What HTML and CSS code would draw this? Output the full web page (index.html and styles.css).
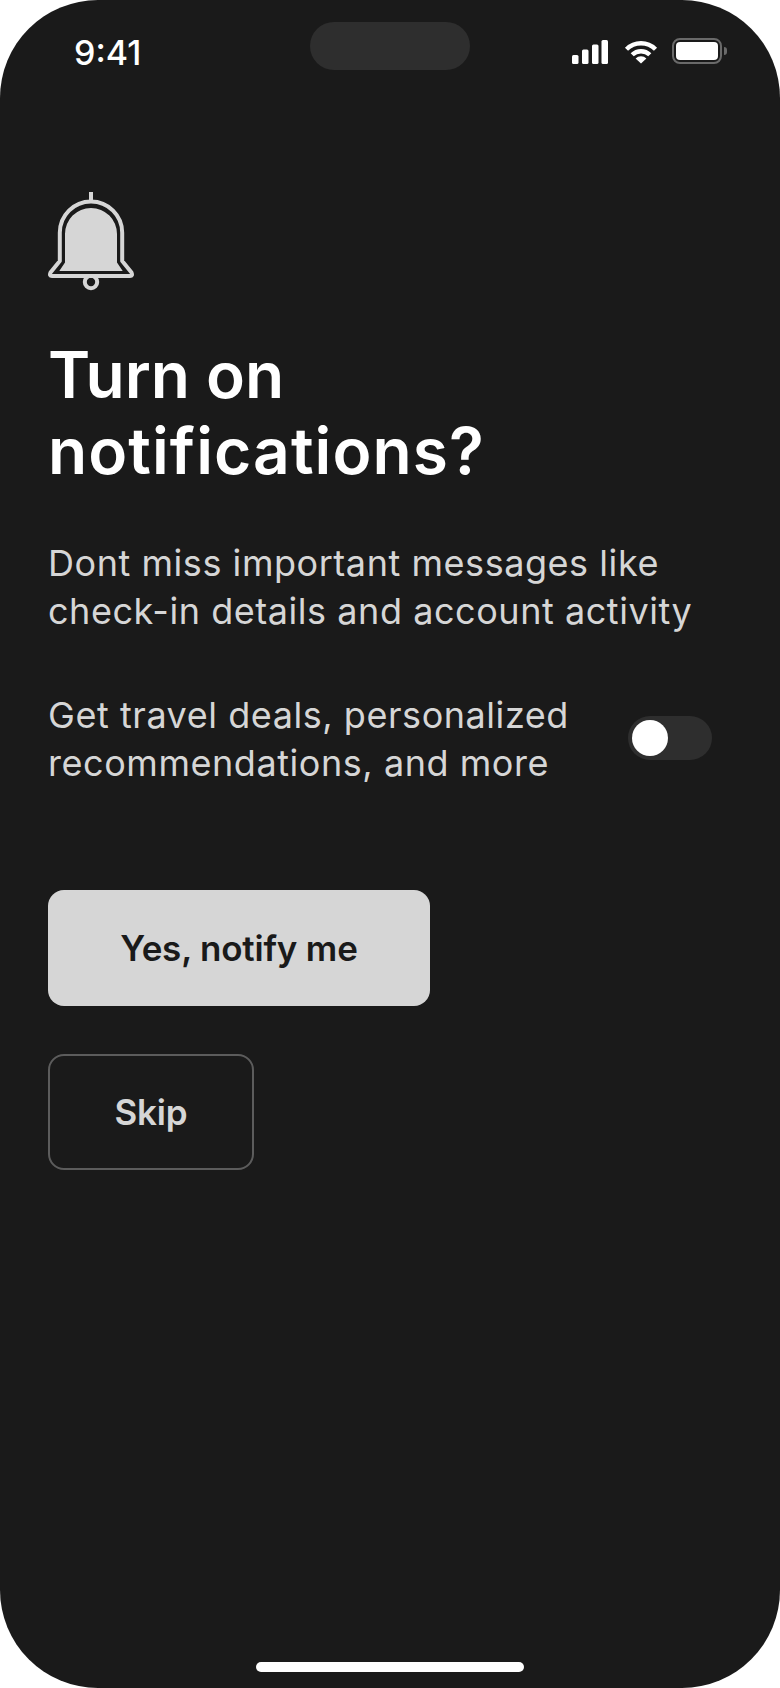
FILE: index.html
```html
<!DOCTYPE html>
<html lang="en">
<head>
  <meta charset="UTF-8" />
  <meta name="viewport" content="width=device-width, initial-scale=1.0"/>
  <title>Turn on notifications?</title>
  <link rel="stylesheet" href="styles.css">
</head>
<body>
  <div class="pantalla">

    <!-- status bar -->
    <div class="barra-estado">
      <span class="hora">9:41</span>
      <div class="isla"></div>
      <div class="iconos-estado">
        <svg class="senal" width="36" height="24" viewBox="0 0 36 24">
          <rect x="0" y="15" width="6.5" height="9" rx="1.5"/>
          <rect x="10" y="9.5" width="6.5" height="14.5" rx="1.5"/>
          <rect x="20" y="4.5" width="6.5" height="19.5" rx="1.5"/>
          <rect x="29.5" y="0" width="6.5" height="24" rx="1.5"/>
        </svg>
        <svg class="wifi" width="34" height="24" viewBox="0 0 34 24">
          <path d="M2.5 9.2 A20.5 20.5 0 0 1 31.5 9.2" fill="none" stroke="#fff" stroke-width="4.4"/>
          <path d="M8.2 14.8 A12.5 12.5 0 0 1 25.8 14.8" fill="none" stroke="#fff" stroke-width="4.4"/>
          <path d="M11.6 18.4 A7.6 7.6 0 0 1 22.4 18.4 L17 23.6 Z" fill="#fff"/>
        </svg>
        <div class="bateria"><div class="carga"></div></div>
      </div>
    </div>

    <!-- content -->
    <div class="contenido">
      <svg class="campana" width="92" height="101" viewBox="18 10 92 101">
        <path d="M61 12 V21" fill="none" stroke="#d6d6d6" stroke-width="4"/>
        <circle cx="61" cy="102" r="6.2" fill="#1a1a1a" stroke="#d6d6d6" stroke-width="4"/>
        <path d="M29.8 81 V52.7 A31.2 31.2 0 0 1 92.2 52.7 V81 L101.5 92.5 Q103 96 100 96 H22 Q19 96 20.5 92.5 Z" fill="#1a1a1a" stroke="#d6d6d6" stroke-width="4" stroke-linejoin="round"/>
        <path d="M35 82.5 V54 A26 26 0 0 1 87 54 V82.5 L92.7 91 H29.3 Z" fill="#d6d6d6"/>
      </svg>

      <h1>Turn on<br><span class="linea-ancha">notifications?</span></h1>

      <p class="texto">Dont miss important messages like<br>check-in details and account activity</p>

      <div class="fila-ajuste">
        <p class="texto">Get travel deals, personalized<br>recommendations, and more</p>
        <div class="interruptor"><div class="perilla"></div></div>
      </div>

      <button class="boton boton-principal">Yes, notify me</button>
      <button class="boton boton-secundario">Skip</button>
    </div>

    <div class="indicador"></div>
  </div>
</body>
</html>
```

FILE: styles.css
```css
* {
  box-sizing: border-box;
  margin: 0;
  padding: 0;
}

html, body {
  height: 100%;
  background: #fff;
  overflow: hidden;
  font-family: 'Inter', 'Noto Sans', sans-serif;
}

.pantalla {
  width: 780px;
  height: 1688px;
  background: #1a1a1a;
  border-radius: 98px;
  display: flex;
  flex-direction: column;
  overflow: hidden;
}

.barra-estado {
  height: 70px;
  margin-top: 22px;
  padding: 0 58px 0 74px;
  display: grid;
  grid-template-columns: 236px 160px 1fr;
  align-items: start;
}

.hora {
  color: #fff;
  font-size: 34px;
  font-weight: 500;
  line-height: 62px;
}

.isla {
  height: 48px;
  background: #2e2e2e;
  border-radius: 24px;
}

.iconos-estado {
  justify-self: end;
  height: 42px;
  display: flex;
  align-items: flex-end;
  gap: 16px;
  fill: #fff;
}

.senal, .wifi {
  flex: none;
}

.bateria {
  position: relative;
  flex: none;
  width: 50px;
  height: 26px;
  margin-left: -2px;
  padding: 2px;
  border: 2px solid #6a6a6a;
  border-radius: 8px;
}

.bateria::after {
  content: "";
  position: absolute;
  top: 7px;
  right: -7px;
  width: 3px;
  height: 8px;
  background: #6a6a6a;
  border-radius: 0 3px 3px 0;
}

.carga {
  height: 100%;
  background: #fff;
  border-radius: 4px;
}

.contenido {
  padding: 98px 68px 0 48px;
}

.campana {
  display: block;
}

h1 {
  margin-top: 46px;
  color: #fff;
  font-size: 64px;
  font-weight: 600;
  line-height: 76px;
}

.linea-ancha {
  letter-spacing: 1.1px;
}

.texto {
  color: #d6d6d6;
  font-size: 36px;
  letter-spacing: 0.55px;
  line-height: 48px;
}

h1 + .texto {
  margin-top: 50px;
}

.fila-ajuste {
  margin-top: 56px;
  display: flex;
  justify-content: space-between;
  align-items: center;
}

.interruptor {
  width: 84px;
  height: 44px;
  margin-top: -2px;
  padding: 4px;
  background: #2e2e2e;
  border-radius: 22px;
}

.perilla {
  width: 36px;
  height: 36px;
  background: #fff;
  border-radius: 50%;
}

.boton {
  display: block;
  height: 116px;
  border-radius: 16px;
  font-family: inherit;
  font-size: 35px;
  font-weight: 600;
  letter-spacing: -0.2px;
  cursor: pointer;
}

.boton-principal {
  width: 382px;
  margin-top: 103px;
  background: #d6d6d6;
  color: #1a1a1a;
  border: none;
}

.boton-secundario {
  width: 206px;
  margin-top: 48px;
  background: transparent;
  color: #d6d6d6;
  border: 2px solid #5c5c5c;
}

.indicador {
  width: 268px;
  height: 10px;
  margin: auto auto 16px;
  background: #fff;
  border-radius: 5px;
}
```
